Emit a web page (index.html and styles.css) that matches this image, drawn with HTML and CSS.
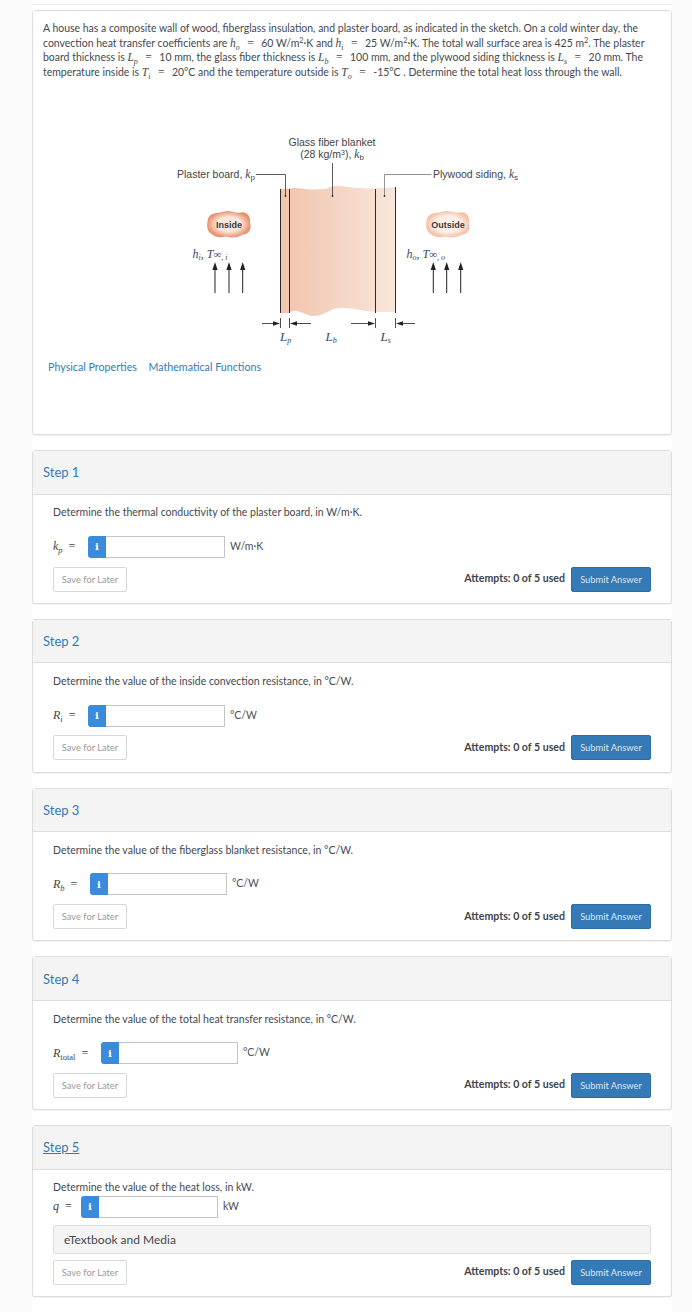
FILE: index.html
```html
<!DOCTYPE html>
<html lang="en">
<head>
    <meta charset="UTF-8">
    <title>Composite Wall Problem</title>
    <link rel="stylesheet" href="styles.css">
</head>
<body>
    <div class="page">
        <div class="top-rule"></div>
        <div class="card question">
            <p class="question-text">
                A house has a composite wall of wood, fiberglass insulation, and plaster board, as indicated in the sketch. On a cold winter day, the<br>
                convection heat transfer coefficients are <span class="math">h<sub>o</sub><span class="rel">=</span></span>60 W/m<sup>2</sup>&middot;K and <span class="math">h<sub>i</sub><span class="rel">=</span></span>25 W/m<sup>2</sup>&middot;K. The total wall surface area is 425 m<sup>2</sup>. The plaster<br>
                board thickness is <span class="math">L<sub>p</sub><span class="rel">=</span></span>10 mm, the glass fiber thickness is <span class="math">L<sub>b</sub><span class="rel">=</span></span>100 mm, and the plywood siding thickness is <span class="math">L<sub>s</sub><span class="rel">=</span></span>20 mm. The<br>
                temperature inside is <span class="math">T<sub>i</sub><span class="rel">=</span></span>20&deg;C and the temperature outside is <span class="math">T<sub>o</sub><span class="rel">=</span></span>-15&deg;C . Determine the total heat loss through the wall.
            </p>
            <svg class="sketch" width="380" height="230" viewBox="0 0 380 230">
                <defs>
                    <linearGradient id="wallFill" x1="0" x2="1" y1="0" y2="0">
                        <stop offset="0" stop-color="#f2c6b0"/>
                        <stop offset="0.08" stop-color="#f2c6b0"/>
                        <stop offset="1" stop-color="#f8e6da"/>
                    </linearGradient>
                    <radialGradient id="cloudIn">
                        <stop offset="0.55" stop-color="#fbe6da"/>
                        <stop offset="1" stop-color="#e9916e"/>
                    </radialGradient>
                    <radialGradient id="cloudOut">
                        <stop offset="0.6" stop-color="#fdf0e8"/>
                        <stop offset="1" stop-color="#f5c1a6"/>
                    </radialGradient>
                    <path id="cloud" d="M-21 -6 C-18 -13 -10 -11 -5 -13 C0 -15 6 -11 12 -12 C18 -13 22 -8 21 -2 C23 4 20 10 14 10 C9 13 3 14 -3 12 C-9 14 -15 12 -18 9 C-23 6 -22 -1 -21 -6 Z"/>
                    <path id="up" d="M0 31 V7"/>
                    <path id="head" d="M0 0 L2.6 8 H-2.6 Z"/>
                </defs>

                <path fill="url(#wallFill)" d="M120.3 63 L130 62.5 C138 61 146 64 154 63.5 C160 63 166 64 170 61 C178 58 190 62 200 62 C210 63 225 62 235.3 61 V186 L215 186 C200 185 190 181 178 182 C170 183 162 191 152 190 C144 189 136 181 129.3 187 L120.3 187 Z"/>

                <g class="wall-lines">
                    <path d="M120.5 63 V187"/>
                    <path d="M129.5 63 V187"/>
                    <path d="M215.5 63 V187"/>
                    <path d="M235.5 61 V187"/>
                </g>

                <g class="leaders">
                    <path d="M96 48.5 H125.5 V70"/>
                    <path d="M172.5 37 V70"/>
                    <path class="grey" d="M271.5 48.5 H224.5 V70"/>
                    <circle cx="125.5" cy="70" r="0.9"/>
                    <circle cx="172.5" cy="70" r="0.9"/>
                    <circle cx="224.5" cy="70" r="0.9"/>
                </g>

                <text class="label" x="172" y="20" text-anchor="middle">Glass fiber blanket</text>
                <text class="label" x="172" y="32" text-anchor="middle">(28 kg/m<tspan class="sup" dy="-3">3</tspan><tspan dy="3">), </tspan><tspan class="var">k</tspan><tspan class="sub" dy="2">b</tspan></text>
                <text class="label" x="17" y="52">Plaster board, <tspan class="var">k</tspan><tspan class="sub" dy="2">p</tspan></text>
                <text class="label" x="273" y="52">Plywood siding, <tspan class="var">k</tspan><tspan class="sub" dy="2">s</tspan></text>

                <use href="#cloud" x="69" y="98.5" fill="url(#cloudIn)"/>
                <use href="#cloud" x="288" y="98.5" fill="url(#cloudOut)"/>
                <text class="cloud-text" x="69" y="102" text-anchor="middle">Inside</text>
                <text class="cloud-text" x="288" y="102" text-anchor="middle">Outside</text>

                <text class="var-label" x="32.5" y="132">h<tspan class="sub" dy="2">i</tspan><tspan dy="-2">, T</tspan><tspan class="inf">&infin;</tspan><tspan class="sub" dy="2">, i</tspan></text>
                <text class="var-label" x="246.5" y="132">h<tspan class="sub" dy="2">o</tspan><tspan dy="-2">, T</tspan><tspan class="inf">&infin;</tspan><tspan class="sub" dy="2">, o</tspan></text>

                <g class="arrows">
                    <g transform="translate(55 136)"><use href="#up"/><use class="tip" href="#head"/></g>
                    <g transform="translate(69 136)"><use href="#up"/><use class="tip" href="#head"/></g>
                    <g transform="translate(82.7 136)"><use href="#up"/><use class="tip" href="#head"/></g>
                    <g transform="translate(273.3 136)"><use href="#up"/><use class="tip" href="#head"/></g>
                    <g transform="translate(286.7 136)"><use href="#up"/><use class="tip" href="#head"/></g>
                    <g transform="translate(300.7 136)"><use href="#up"/><use class="tip" href="#head"/></g>
                </g>

                <g class="dims">
                    <path d="M120.5 192 V202"/>
                    <path d="M129.5 192 V202"/>
                    <path d="M215.5 192 V202"/>
                    <path d="M235.5 192 V202"/>
                    <path d="M102 197.5 H115"/>
                    <path d="M151 197.5 H134"/>
                    <path d="M191 197.5 H211"/>
                    <path d="M255 197.5 H240"/>
                    <path class="tip" d="M120 197.5 L113 195.3 V199.7 Z"/>
                    <path class="tip" d="M130 197.5 L137 195.3 V199.7 Z"/>
                    <path class="tip" d="M215 197.5 L208 195.3 V199.7 Z"/>
                    <path class="tip" d="M236 197.5 L243 195.3 V199.7 Z"/>
                </g>

                <text class="var-label big" x="120" y="215">L<tspan class="sub" dy="2">p</tspan></text>
                <text class="var-label big" x="165.5" y="215">L<tspan class="sub" dy="2">b</tspan></text>
                <text class="var-label big" x="220.5" y="215">L<tspan class="sub" dy="2">s</tspan></text>
            </svg>
            <div class="links">
                <a href="#">Physical Properties</a>
                <a href="#">Mathematical Functions</a>
            </div>
        </div>

        <div class="card step">
            <div class="step-header"><a href="#">Step 1</a></div>
            <div class="step-body">
                <p class="prompt">Determine the thermal conductivity of the plaster board, in W/m&middot;K.</p>
                <div class="answer-row">
                    <span class="math eq eq-kp">k<sub>p</sub><span class="rel">=</span></span>
                    <span class="info">i</span>
                    <input class="answer" type="text">
                    <span class="unit">W/m&middot;K</span>
                </div>
                <div class="actions">
                    <button class="save">Save for Later</button>
                    <span class="attempts">Attempts: 0 of 5 used</span>
                    <button class="submit">Submit Answer</button>
                </div>
            </div>
        </div>

        <div class="card step">
            <div class="step-header"><a href="#">Step 2</a></div>
            <div class="step-body">
                <p class="prompt">Determine the value of the inside convection resistance, in &deg;C/W.</p>
                <div class="answer-row">
                    <span class="math eq eq-ri">R<sub>i</sub><span class="rel">=</span></span>
                    <span class="info">i</span>
                    <input class="answer" type="text">
                    <span class="unit">&deg;C/W</span>
                </div>
                <div class="actions">
                    <button class="save">Save for Later</button>
                    <span class="attempts">Attempts: 0 of 5 used</span>
                    <button class="submit">Submit Answer</button>
                </div>
            </div>
        </div>

        <div class="card step">
            <div class="step-header"><a href="#">Step 3</a></div>
            <div class="step-body">
                <p class="prompt">Determine the value of the fiberglass blanket resistance, in &deg;C/W.</p>
                <div class="answer-row">
                    <span class="math eq eq-rb">R<sub>b</sub><span class="rel">=</span></span>
                    <span class="info">i</span>
                    <input class="answer" type="text">
                    <span class="unit">&deg;C/W</span>
                </div>
                <div class="actions">
                    <button class="save">Save for Later</button>
                    <span class="attempts">Attempts: 0 of 5 used</span>
                    <button class="submit">Submit Answer</button>
                </div>
            </div>
        </div>

        <div class="card step">
            <div class="step-header"><a href="#">Step 4</a></div>
            <div class="step-body">
                <p class="prompt">Determine the value of the total heat transfer resistance, in &deg;C/W.</p>
                <div class="answer-row">
                    <span class="math eq eq-rt">R<sub class="upright">total</sub><span class="rel">=</span></span>
                    <span class="info">i</span>
                    <input class="answer" type="text">
                    <span class="unit">&deg;C/W</span>
                </div>
                <div class="actions">
                    <button class="save">Save for Later</button>
                    <span class="attempts">Attempts: 0 of 5 used</span>
                    <button class="submit">Submit Answer</button>
                </div>
            </div>
        </div>

        <div class="card step last">
            <div class="step-header"><a class="current" href="#">Step 5</a></div>
            <div class="step-body">
                <p class="prompt">Determine the value of the heat loss, in kW.</p>
                <div class="answer-row">
                    <span class="math eq eq-q">q<span class="rel">=</span></span>
                    <span class="info">i</span>
                    <input class="answer" type="text">
                    <span class="unit">kW</span>
                </div>
                <div class="media">eTextbook and Media</div>
                <div class="actions">
                    <button class="save">Save for Later</button>
                    <span class="attempts">Attempts: 0 of 5 used</span>
                    <button class="submit">Submit Answer</button>
                </div>
            </div>
        </div>
    </div>
</body>
</html>
```

FILE: styles.css
```css
html, body {
    margin: 0;
    padding: 0;
}
body {
    font-family: Lato, "Open Sans", sans-serif;
    font-size: 10.5px;
    color: #4a4f55;
    background-color: #fafafa;
}
.page {
    width: 640px;
    min-height: 1312px;
    margin-left: 32px;
    background: #fff;
}
.top-rule {
    height: 5px;
    border-bottom: 1px solid #eee;
    box-sizing: border-box;
    margin-bottom: 5px;
}
.card {
    background: #fff;
    border: 1px solid #ddd;
    border-radius: 3px;
    box-shadow: 0 1px 1px rgba(0, 0, 0, 0.06);
    box-sizing: border-box;
    margin-bottom: 15px;
}
.question {
    height: 425px;
    padding: 10px 10px 0 10px;
}
.question-text {
    margin: 0;
    font-size: 10.48px;
    line-height: 14.6px;
    white-space: nowrap;
    color: #44494f;
}
.question-text .rel {
    margin: 0 7.5px;
}
.math {
    font-family: "Liberation Serif", serif;
    font-style: italic;
    font-size: 11.5px;
}
.math sub {
    font-size: 70%;
    line-height: 0;
}
.math sub.upright {
    font-style: normal;
}
.rel {
    font-style: normal;
    margin: 0 6px;
}
sup {
    font-size: 70%;
    line-height: 0;
}
.sketch {
    display: block;
    margin: 47px 0 0 117px;
}
.links {
    margin: 4px 0 0 5px;
    display: flex;
    gap: 11.5px;
    font-size: 10.7px;
    line-height: 14px;
}
.links a {
    color: #337ab7;
    text-decoration: none;
}

/* sketch */
.wall-lines path {
    stroke: #2b2b2b;
    stroke-width: 1;
    fill: none;
}
.leaders path {
    stroke: #333;
    stroke-width: 0.8;
    fill: none;
}
.leaders path.grey {
    stroke: #777;
}
.leaders circle {
    fill: #333;
}
.label {
    font-family: "Liberation Sans", sans-serif;
    font-size: 10.5px;
    fill: #444;
}
.var, .var-label {
    font-family: "Liberation Serif", serif;
    font-style: italic;
    fill: #3d4660;
}
.var {
    font-size: 11.5px;
}
.var-label {
    font-size: 12px;
}
.var-label.big {
    font-size: 13px;
}
.sub {
    font-size: 8px;
}
.sup {
    font-size: 7px;
}
.inf {
    font-size: 11px;
}
.cloud-text {
    font-family: "Liberation Sans", sans-serif;
    font-weight: bold;
    font-size: 9px;
    fill: #3a3a3a;
}
.arrows use {
    stroke: #222;
    stroke-width: 1;
    fill: none;
}
.arrows use.tip {
    fill: #222;
    stroke: none;
}
.dims path {
    stroke: #222;
    stroke-width: 0.8;
    fill: none;
}
.dims path.tip {
    fill: #222;
    stroke: none;
}

/* steps */
.step {
    height: 153.75px;
}
.step.last {
    height: 172px;
    margin-bottom: 0;
}
.step-header {
    height: 43.5px;
    box-sizing: border-box;
    background: #f4f4f4;
    border-bottom: 1px solid #ddd;
    display: flex;
    align-items: center;
    padding-left: 10px;
    font-size: 13px;
}
.step-header a {
    color: #337ab7;
    text-decoration: none;
}
.step-header a.current {
    text-decoration: underline;
}
.step-body {
    padding: 10.8px 20px 0 20px;
}
.prompt {
    margin: 0;
    line-height: 14px;
    color: #44494f;
}
.answer-row {
    display: flex;
    align-items: center;
    height: 22px;
    margin-top: 16.7px;
}
.last .answer-row {
    margin-top: 1.7px;
}
.eq {
    font-size: 12px;
    white-space: nowrap;
    color: #444;
}
.eq sub {
    font-size: 8.5px;
}
.eq-kp { width: 35px; }
.eq-ri { width: 35px; }
.eq-rb { width: 37px; }
.eq-rt { width: 48px; }
.eq-q { width: 28px; }
.info {
    width: 18px;
    height: 22px;
    background: #3a8bdb;
    border-radius: 3px 0 0 3px;
    color: #fff;
    font-family: "DejaVu Serif", serif;
    font-weight: bold;
    font-size: 10px;
    display: flex;
    align-items: center;
    justify-content: center;
}
.answer {
    width: 119px;
    height: 22px;
    box-sizing: border-box;
    border: 1px solid #c4c4c4;
    border-left: none;
    border-radius: 0;
    padding: 0;
    margin: 0;
    background: #fff;
}
.unit {
    margin: 0 0 2px 5px;
    color: #4a4f55;
}
.actions {
    display: flex;
    align-items: center;
    margin-top: 8.7px;
}
.save {
    width: 74px;
    height: 25px;
    padding: 0;
    background: #fff;
    border: 1px solid #d8d8d8;
    border-radius: 2px;
    color: #999;
    font-family: Lato, sans-serif;
    font-size: 9.3px;
}
.attempts {
    margin-left: auto;
    margin-bottom: 2px;
    font-size: 10.6px;
    font-weight: 700;
    color: #3f4449;
}
.submit {
    width: 80px;
    height: 25px;
    margin-left: 6px;
    padding: 0;
    background: #337ab7;
    border: 1px solid #2e6da4;
    border-radius: 2px;
    color: #dfe9f3;
    font-family: Lato, sans-serif;
    font-size: 9.3px;
}
.media {
    margin-top: 7px;
    height: 29px;
    box-sizing: border-box;
    background: #f4f4f4;
    border: 1px solid #ddd;
    border-radius: 3px;
    padding-left: 10px;
    display: flex;
    align-items: center;
    font-size: 12px;
    color: #44494f;
}
.last .actions {
    margin-top: 6px;
}
```
